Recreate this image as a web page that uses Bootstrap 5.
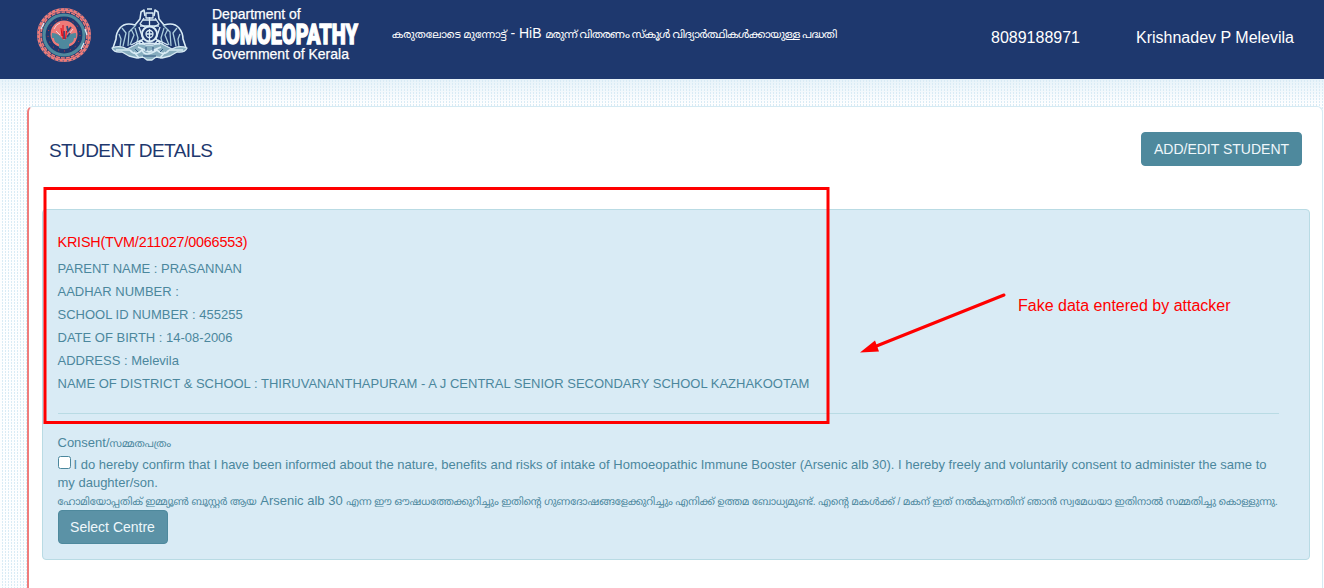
<!DOCTYPE html>
<html lang="en">
<head>
<meta charset="utf-8">
<meta name="viewport" content="width=device-width, initial-scale=1">
<title>Student Details</title>
<link href="https://cdn.jsdelivr.net/npm/bootstrap@5.3.0/dist/css/bootstrap.min.css" rel="stylesheet">
<style>
body{font-family:"Liberation Sans","Noto Sans Malayalam",sans-serif;background:#f1f9fd;height:588px;overflow:hidden;color:#4b879d}
.topbar{height:79px;background:#1e386e;color:#fff;padding-left:36px;padding-right:30px}
.emblem{margin-left:18px}
.dept{width:146px;margin-left:22px;font-size:14px;line-height:14px;white-space:nowrap;padding-top:7px;-webkit-text-stroke:.25px #fff}
.dept-name{font-family:Roboto,sans-serif;font-weight:900;font-size:28px;line-height:28px;height:26px;transform-origin:0 50%;transform:scaleX(.71);-webkit-text-stroke:1.3px #fff}
.tagline{margin-left:34px;width:446px;padding-top:24px;font-size:14px;line-height:19px;white-space:nowrap}
.ml{font-size:.78em}
.tagline .ml:first-child{letter-spacing:-.13px}
.tagline .ml:last-child{letter-spacing:-.53px}
.topbar-info{font-size:16px;line-height:24px;padding-top:26px;white-space:nowrap}
.topbar-info .user{margin-left:56px}
.backdrop{height:509px;padding:27px 1px 0 27px;background:linear-gradient(#d9ebf599,#d9ebf500 24px),conic-gradient(transparent 25%,#d9ebf5 0 50%,transparent 0) 0 0/3px 3px,#fdfeff}
.sheet{height:482px;background:#fff;border:1px solid #d5eaf3;border-left:2px solid #f07c7c;border-bottom:0;border-radius:6px 6px 0 0;padding:25px 12px 0 13px}
.sheet h1{font-size:19px;letter-spacing:-.6px;line-height:24px;color:#1e386e;padding:7px 0 0 7px}
.btn-teal{--bs-btn-color:#eef7fb;--bs-btn-bg:#4e899d;--bs-btn-border-color:#4e899d;--bs-btn-hover-bg:#407b8f;--bs-btn-hover-color:#fff;--bs-btn-border-radius:4px;font-size:14px;line-height:20px;height:34px;padding:6px 0}
.add-btn{width:161px;margin-right:8px}
.centre-btn{width:110px;--bs-btn-bg:#5b92a6;display:block;margin-top:-1px}
.panel{margin-top:43px;height:351px;background:#d9ebf5;border:1px solid #b9dbe4;border-radius:4px;padding:21px 30px 0 14.5px;font-size:13px}
.student{color:#f00;font-size:14.4px;letter-spacing:-.2px;line-height:22px;margin:0 0 4px}
.facts li{height:23px;line-height:23px;white-space:nowrap}
.rule{border:0;border-top:1px solid #b9dbe4;opacity:1;margin:18px 0 20px}
.consent{line-height:18px}
.consent p{margin:0;white-space:nowrap}
.consent .form-check-input{width:13px;height:13px;margin:0 3px 0 0;border:1px solid #4b879d;border-radius:2.5px;float:none;vertical-align:0}
.consent .agree{padding-top:3px}
.consent .agree-ml .ml{font-size:10.02px}
.consent .agree-ml .ml:first-child{letter-spacing:-.07px}
.consent .agree-ml .ml:last-child{letter-spacing:-.015px}
.overlay{left:0;top:0;width:1324px;height:588px;pointer-events:none}
.note{left:1018px;top:296px;font-size:16px;line-height:19px;color:#f00;white-space:nowrap}
</style>
</head>
<body class="position-relative">
<header class="topbar d-flex">
  <svg width="56" height="66" viewBox="0 0 56 66" class="flex-shrink-0" fill="none">
    <circle cx="28" cy="35" r="25.5" stroke="#ee7b79" stroke-width="3"/>
    <circle cx="28" cy="35" r="26" stroke="#4b5c87" stroke-width="1.2" stroke-dasharray="1.5 3"/>
    <circle cx="28" cy="35" r="23" stroke="#ee7b79" stroke-width="1.5" stroke-dasharray="4 1"/>
    <circle cx="28" cy="35" r="20" stroke="#4e899d" stroke-width="3.200"/>
    <circle cx="28" cy="35" r="16" stroke="#e33" stroke-width="1" stroke-dasharray="1 5"/>
    <path d="M5 29l3-6M49 29l2 6M48 43l-3 6" stroke="#d9ebf5" stroke-width="1.300"/>
    <circle cx="28" cy="34" r="13.500" fill="#ee7b79"/>
    <path d="M16 33q5 0 8 3l4 4 4-4q3-3 8-3 1 4-1 7-3 3-6 4v4q-5 2-10 0v-4q-4-1-6-4-2-3-1-7" fill="#4e899d"/>
    <path d="M17 38q0 5 5 7M39 38q0 5-5 7" stroke="#ee7b79" stroke-width="2"/>
    <path d="M18 29q2-5 6-6M20 31l4 4M37 29l-4 5" stroke="#e9d5dc" stroke-width="1"/>
    <path d="M31 26l1 5 3-4M34 33l-3 4M28 31v8" stroke="#2c4e7c" stroke-width="1.800"/>
    <path d="M27 25v14M25 28l1 8M30.500 31l-1 8" stroke="#e00d1c" stroke-width="1.100"/>
  </svg>
  <svg width="80" height="66" viewBox="0 0 80 66" class="emblem flex-shrink-0" fill="none" stroke="#d9ebf5" stroke-width="1.300" stroke-linejoin="round">
    <path d="M36 13h7v5h-7zM33 20h13M30 26h19M39.500 17v9M37 9h5"/>
    <circle cx="39.500" cy="34" r="7.500" stroke-width="2"/><circle cx="39.500" cy="34" r="3.500"/><path d="M39.500 29v12M36 34h7"/>
    <path d="M35 16l-1-6-3 2-1 7-5 6q-10-3-15 3Q6 33 6 39l-3 9M44 16l1-6 3 2 1 7 5 6q10-3 15 3 4 5 4 11l3 9" stroke-width="1.600"/>
    <path d="M26 25l-7 7-1 14M25 28l3 10-2 8M21 29l3 6-4 10M12 28l4 5-3 13M9 34l2 5-1 8M53 25l7 7 1 14M54 28l-3 10 2 8M58 29l-3 6 4 10M67 28l-4 5 3 13M70 34l-2 5 1 8" stroke="#a9cbdb"/>
    <path d="M29 27l4 12-8 8M50 27l-4 12 8 8M34 18l-4 6 5 3M45 18l4 6-5 3M21 45l10-5 4 5M58 45l-10-5-4 5"/>
    <path d="M2 48q8-3 15 1l12-6 7 2h7l7-2 12 6q7-4 15-1-2 5-10 4l-7 4-8 2-6-1-4 3h-5l-4-3-6 1-8-2-7-4q-8 1-10-4z" fill="#87adbf"/>
    <path d="M20 50q5 7 12 0 3 8 15 0 7 7 12 0M28 47l11 5 12-5M29 44l10-1 11 1M6 50h14M59 50h14M24 52l5 6M55 52l-5 6" stroke-width="1.600"/>
    <path d="M25 49l3 3M36 47v4M43 47v4M53 49l-3 3M33 56h13" stroke="#2e5580" stroke-width="1"/>
  </svg>
  <div class="dept flex-shrink-0"><div>Department of</div><div class="dept-name">HOMOEOPATHY</div><div>Government of Kerala</div></div>
  <div class="tagline flex-shrink-0"><span class="ml">കരുതലോടെ മുന്നോട്ട്</span> - HiB <span class="ml">മരുന്ന് വിതരണം സ്കൂൾ വിദ്യാർത്ഥികൾക്കായുള്ള പദ്ധതി</span></div>
  <div class="topbar-info d-flex ms-auto"><span>8089188971</span><span class="user">Krishnadev P Melevila</span></div>
</header>
<main class="backdrop">
  <section class="sheet">
    <div class="d-flex justify-content-between">
      <h1 class="m-0 fw-normal">STUDENT DETAILS</h1>
      <button class="btn btn-teal add-btn">ADD/EDIT STUDENT</button>
    </div>
    <div class="panel">
      <h2 class="student fw-normal">KRISH(TVM/211027/0066553)</h2>
      <ul class="facts list-unstyled m-0">
        <li>PARENT NAME : PRASANNAN</li>
        <li>AADHAR NUMBER :</li>
        <li>SCHOOL ID NUMBER : 455255</li>
        <li>DATE OF BIRTH : 14-08-2006</li>
        <li>ADDRESS : Melevila</li>
        <li>NAME OF DISTRICT &amp; SCHOOL : THIRUVANANTHAPURAM - A J CENTRAL SENIOR SECONDARY SCHOOL KAZHAKOOTAM</li>
      </ul>
      <hr class="rule">
      <div class="consent">
        <p>Consent/<span class="ml">സമ്മതപത്രം</span></p>
        <p class="agree"><input class="form-check-input" type="checkbox" aria-label="Consent">I do hereby confirm that I have been informed about the nature, benefits and risks of intake of Homoeopathic Immune Booster (Arsenic alb 30). I hereby freely and voluntarily consent to administer the same to<br>my daughter/son.</p>
        <p class="agree-ml"><span class="ml">ഹോമിയോപ്പതിക് ഇമ്മ്യൂൺ ബൂസ്റ്റർ ആയ</span> Arsenic alb 30 <span class="ml">എന്ന ഈ ഔഷധത്തേക്കുറിച്ചും ഇതിൻ്റെ ഗുണദോഷങ്ങളേക്കുറിച്ചും എനിക്ക് ഉത്തമ ബോധ്യമുണ്ട്. എന്റെ മകൾക്ക് / മകന് ഇത് നൽകുന്നതിന് ഞാൻ സ്വമേധയാ ഇതിനാൽ സമ്മതിച്ചു കൊള്ളുന്നു.</span></p>
        <button class="btn btn-teal centre-btn">Select Centre</button>
      </div>
    </div>
  </section>
</main>
<svg class="overlay position-absolute" viewBox="0 0 1324 588" fill="none">
  <rect x="45" y="188.500" width="783" height="234" stroke="#f00" stroke-width="3"/>
  <path d="M1004 295L874 347" stroke="#f00" stroke-width="3" stroke-linecap="round"/>
  <path d="M860 352.500l15-12 4 11z" fill="#f00"/>
</svg>
<div class="note position-absolute">Fake data entered by attacker</div>
<script src="https://cdn.jsdelivr.net/npm/bootstrap@5.3.0/dist/js/bootstrap.bundle.min.js"></script>
</body>
</html>
